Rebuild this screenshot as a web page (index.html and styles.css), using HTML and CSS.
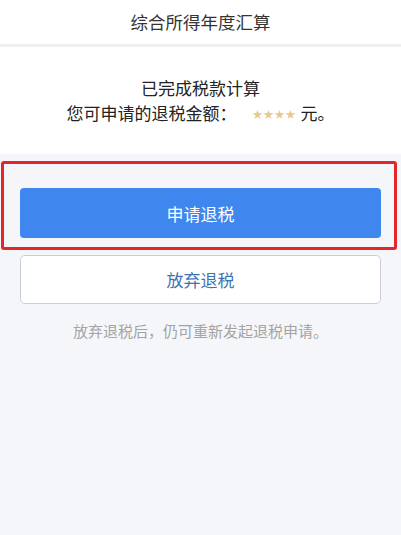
FILE: index.html
```html
<!DOCTYPE html>
<html lang="zh-CN">
<head>
    <meta charset="UTF-8">
    <title>综合所得年度汇算</title>
    <link rel="stylesheet" href="styles.css">
</head>
<body>

<div class="header">综合所得年度汇算</div>

<div class="result">
    <p class="line">已完成税款计算</p>
    <p class="line">您可申请的退税金额：<span class="stars">★★★★</span> 元。</p>
</div>

<!-- red mark round the main button -->
<div class="mark">
    <button class="btn btn-primary">申请退税</button>
</div>

<button class="btn btn-plain">放弃退税</button>

<p class="hint">放弃退税后，仍可重新发起退税申请。</p>

</body>
</html>
```

FILE: styles.css
```css
body {
    margin: 0;
    background-color: #f5f6fa;
    font-family: "Noto Sans CJK SC", "Noto Sans", sans-serif;
    color: #222;
}

.header {
    height: 44px;
    line-height: 44px;
    background-color: #fff;
    border-bottom: 3px solid #efeff1;
    text-align: center;
    font-size: 17.5px;
    color: #333;
}

.result {
    background-color: #fff;
    padding: 28px 0 28px;
    text-align: center;
}

.line {
    margin: 0;
    font-size: 17px;
    line-height: 25px;
}

.stars {
    display: inline-block;
    margin-left: 16px;
    font-size: 10px;
    letter-spacing: 1px;
    color: #e8c88e;
    vertical-align: 2px;
}

/* The red box - annotation drawn round the button */
.mark {
    width: 396px;
    margin: 7px 0 0 1px;
    padding: 24px 13px 9px 16px;
    border: 3px solid #e3262b;
    border-radius: 3px;
    box-sizing: border-box;
}

.btn {
    display: block;
    width: 100%;
    font-family: inherit;
    font-size: 17px;
    text-align: center;
    cursor: pointer;
}

.btn-primary {
    height: 50px;
    background-color: #3f87ee;
    color: #fff;
    border: none;
    border-radius: 4px;
}

.btn-plain {
    width: 361px;
    height: 49px;
    margin: 5px 20px 0;
    background-color: #fff;
    color: #3d73b3;
    border: 1px solid #c9ced8;
    border-radius: 5px;
}

.hint {
    margin: 16px 0 0;
    line-height: 22px;
    font-size: 15px;
    color: #a3a3a3;
    text-align: center;
}
```
